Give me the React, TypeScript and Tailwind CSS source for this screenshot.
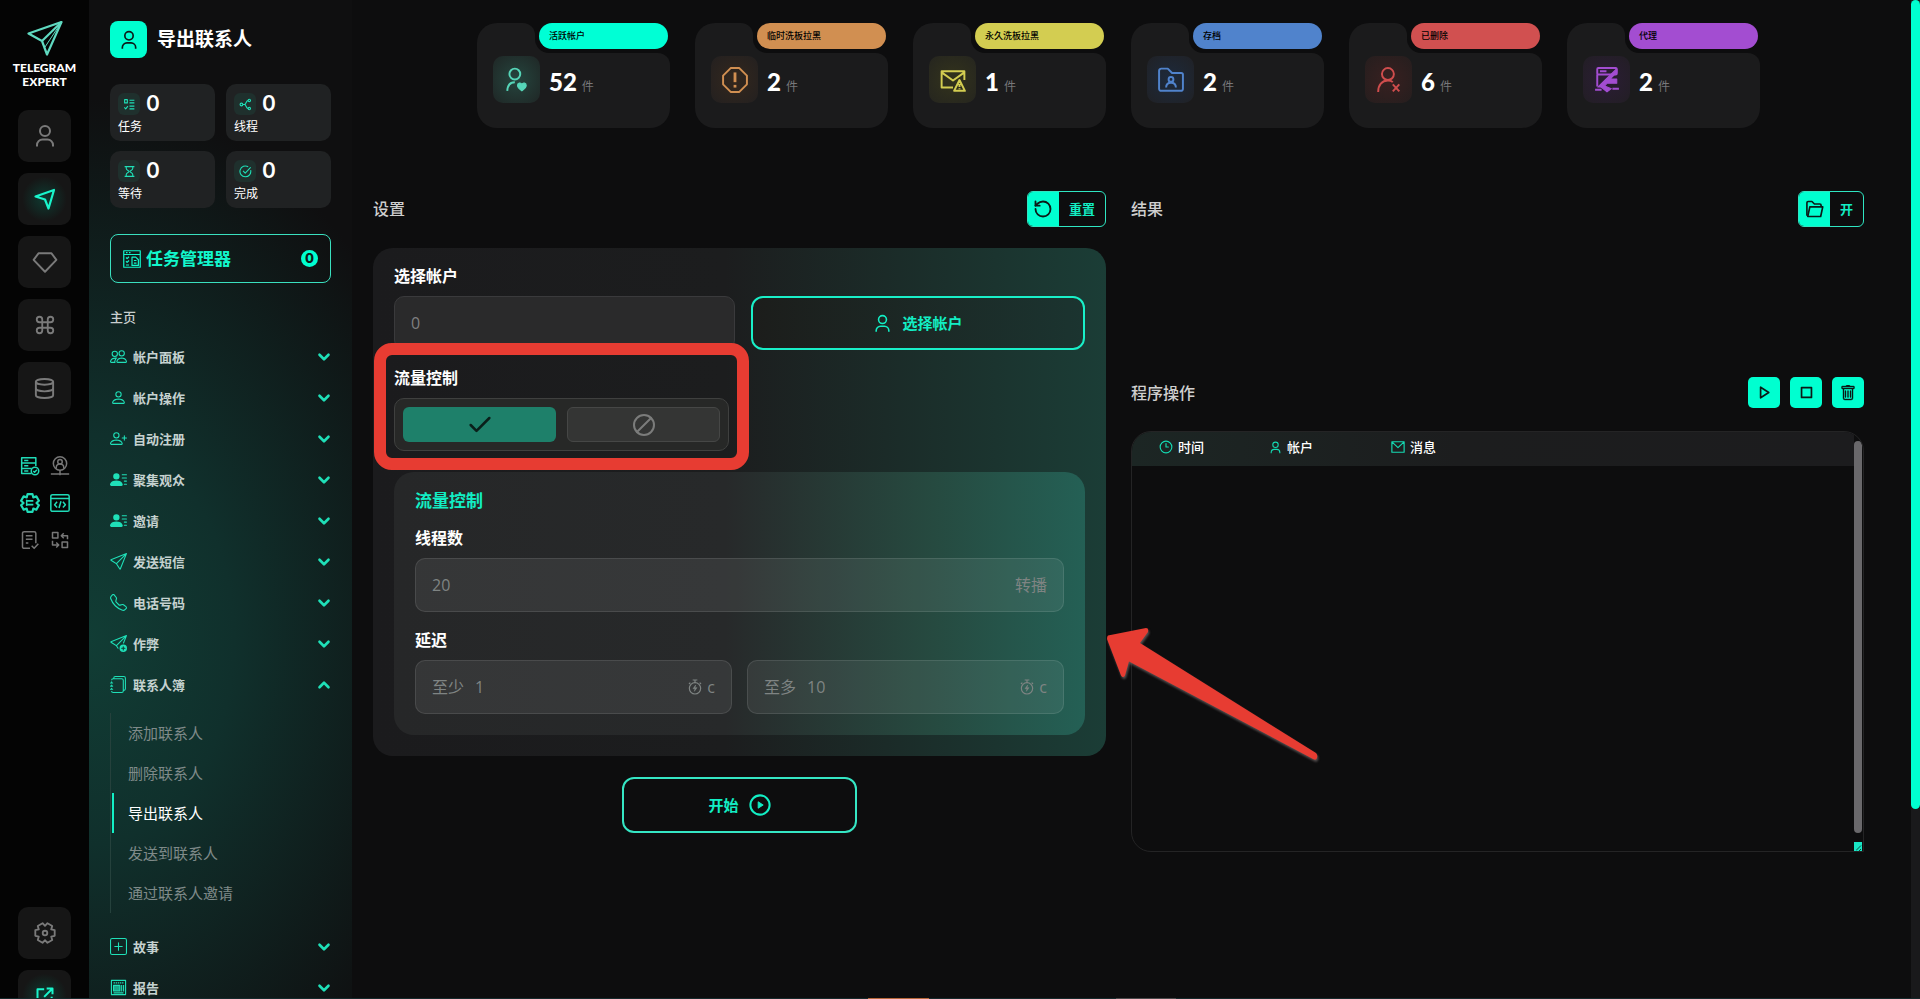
import React from "react";
import {
  BsJournals,
  BsPeople,
  BsPerson,
  BsPersonLinesFill,
  BsPersonPlus,
  BsPlusSquare,
  BsSend,
  BsSendPlus,
  BsTelephone,
  BsTrash,
} from "react-icons/bs";
import {
  Ban,
  Check,
  ChevronDown,
  ChevronUp,
  Clock3,
  Command,
  Database,
  RotateCcw,
} from "lucide-react";

type DrawProps = {
  size?: number;
  stroke?: number;
  className?: string;
  children: React.ReactNode;
};

function Draw({ size = 24, stroke = 2, className = "", children }: DrawProps) {
  return (
    <svg
      aria-hidden="true"
      width={size}
      height={size}
      viewBox="0 0 24 24"
      fill="none"
      stroke="currentColor"
      strokeWidth={stroke}
      strokeLinejoin="round"
      strokeLinecap="butt"
      className={"shrink-0 " + className}
    >
      {children}
    </svg>
  );
}

const userShape = (
  <>
    <circle cx="12" cy="7" r="5" />
    <path d="M4 22.5v-1.5a5.5 5.5 0 0 1 5.500-5.500h5a5.500 5.500 0 0 1 5.500 5.500v1.500" />
  </>
);

const listShape = (
  <>
    <rect x="3" y="3" width="5" height="6" />
    <path d="M12 4h9M12 9h9M12 15h9M12 20h9M2.500 17.500l2.500 2.500 4-5" />
  </>
);

const nodesShape = (
  <>
    <circle cx="4.500" cy="12" r="2.500" />
    <circle cx="19" cy="4.500" r="2.200" />
    <circle cx="19" cy="19.500" r="2.200" />
    <path d="M7 12h3c4 0 2.500-7.500 7-7.500M10 12c4 0 2.500 7.500 7 7.500" />
  </>
);

const hourglassShape = (
  <path d="M3 3h18M3 21h18M6 3v3.500c0 3 5 4 5 5.500s-5 2.500-5 5.500V21M18 3v3.500c0 3-5 4-5 5.500s5 2.500 5 5.500V21" />
);

const doneShape = (
  <>
    <path d="M21.500 9.500A10 10 0 1 1 17 3.300" />
    <path d="M7.500 11l4 4L21.500 4.500" />
  </>
);

const openShape = <path d="M11 4H3v17h17v-8M14 3h7v7M21 3L11 13" />;

const railButtons = [
  { label: "帐户", icon: <Draw size={24} stroke={2}>{userShape}</Draw> },
  {
    label: "发送",
    active: true,
    icon: (
      <Draw size={24} stroke={2.200}>
        <path d="M2.500 9.500L21 3l-5.500 18.500-3.500-9z" />
      </Draw>
    ),
  },
  {
    label: "高级",
    icon: (
      <Draw size={26} stroke={1.8}>
        <path d="M6 4h12l4.500 6L12 21 1.500 10z" />
      </Draw>
    ),
  },
  { label: "命令", icon: <Command size={22} strokeWidth={2} /> },
  { label: "数据库", icon: <Database size={23} strokeWidth={2} /> },
];

const gearPath =
  "M9 1.400h6l.9 3.850 3.740-1.160 3.030 5.250L19.800 12l2.870 2.660-3.030 5.250-3.740-1.160L15 22.600H9l-.9-3.850-3.740 1.160-3.030-5.250L4.200 12 1.330 9.340l3.030-5.250L8.100 5.250z";

const toolIcons = [
  {
    label: "服务器",
    on: true,
    node: (
      <>
        <path d="M14 21H2V2h17v10M2 8.500h17M2 15h12M5 5.300h5M5 11.800h5M5 18h5" />
        <circle cx="18" cy="18" r="4.500" />
        <path d="M16 18l1.500 1.500 2.800-3" />
      </>
    ),
  },
  {
    label: "代理",
    on: false,
    node: (
      <>
        <circle cx="12" cy="9" r="8" />
        <circle cx="12" cy="7" r="2.700" />
        <path d="M7.500 15v-1.500a4.500 4 0 0 1 9 0V15M12 17v6M1 21.500h22" />
      </>
    ),
  },
  {
    label: "设置",
    on: true,
    node: (
      <>
        <path strokeWidth="2.600" d={gearPath} />
        <path strokeWidth="2.200" d="M8 9.500h8M8 14h8" />
        <path d="M8 8v7.500" />
      </>
    ),
  },
  {
    label: "代码",
    on: true,
    node: (
      <>
        <rect x="1" y="2" width="22" height="20" rx="2" />
        <path d="M1 6.500h22M8.500 10.500l-3 3.500 3 3.500M15.500 10.500l3 3.500-3 3.500M13.200 10l-2.400 8" />
      </>
    ),
  },
  {
    label: "文档",
    on: false,
    node: (
      <>
        <path d="M12 22H5a2 2 0 0 1-2-2V4a2 2 0 0 1 2-2h12a2 2 0 0 1 2 2v12" />
        <path d="M7 7h8M7 11h8M7 15.500h3M14 19l3 3 5-5.500" />
      </>
    ),
  },
  {
    label: "交换",
    on: false,
    node: (
      <>
        <rect x="3" y="3" width="6.500" height="6.500" />
        <rect x="14.500" y="14.500" width="6.500" height="6.500" />
        <path d="M21 11V7h-7M16.500 4l-3 3 3 3M3 13v5h7M7.500 15l3 3-3 3" />
      </>
    ),
  },
];

const counters = [
  { label: "任务", shape: listShape },
  { label: "线程", shape: nodesShape },
  { label: "等待", shape: hourglassShape },
  { label: "完成", shape: doneShape },
];

type MenuEntry = { label: string; icon: React.ReactNode; items?: string[] };

const menu: MenuEntry[] = [
  { label: "帐户面板", icon: <BsPeople size={17} /> },
  { label: "帐户操作", icon: <BsPerson size={17} /> },
  { label: "自动注册", icon: <BsPersonPlus size={17} /> },
  { label: "聚集观众", icon: <BsPersonLinesFill size={17} /> },
  { label: "邀请", icon: <BsPersonLinesFill size={17} /> },
  { label: "发送短信", icon: <BsSend size={17} /> },
  { label: "电话号码", icon: <BsTelephone size={17} /> },
  { label: "作弊", icon: <BsSendPlus size={17} /> },
  {
    label: "联系人簿",
    icon: <BsJournals size={17} />,
    items: ["添加联系人", "删除联系人", "导出联系人", "发送到联系人", "通过联系人邀请"],
  },
  { label: "故事", icon: <BsPlusSquare size={17} /> },
  {
    label: "报告",
    icon: (
      <Draw size={17} stroke={1.6}>
        <rect x="2" y="2" width="20" height="20" />
        <path d="M5 5.500h14" strokeDasharray="2 1" />
        <path d="M5 9h9v8H5z" fill="currentColor" fillOpacity="0.7" />
        <path d="M16.500 8.500v9M19.200 8.500v9M5 19.500h14" />
      </Draw>
    ),
  },
];

const activeItem = "导出联系人";

const summary = [
  {
    label: "活跃帐户",
    value: 52,
    badge: "bg-[#00ffd5]",
    tile: "bg-[radial-gradient(circle,#25453e,#1f2625)] text-[#56d5b8]",
    icon: (
      <>
        <circle cx="10" cy="6.500" r="5" />
        <path d="M3 22c.3-5 3-8 7-8" />
        <path
          d="M16.500 22c-2.500-2-4-3-4-5a2.100 2.100 0 0 1 4-1 2.100 2.100 0 0 1 4 1c0 2-1.500 3-4 5z"
          fill="currentColor"
          strokeWidth="1"
        />
      </>
    ),
  },
  {
    label: "临时洗板拉黑",
    value: 2,
    badge: "bg-[#d18f51]",
    tile: "bg-[radial-gradient(circle,#33271d,#232020)] text-[#d18f51]",
    icon: (
      <>
        <path d="M8 1h8l7 7v8l-7 7H8l-7-7V8z" />
        <path d="M12 5v9" strokeWidth="2.600" />
        <path d="M12 16.500v2.500" strokeWidth="2.600" />
      </>
    ),
  },
  {
    label: "永久洗板拉黑",
    value: 1,
    badge: "bg-[#d3cd51]",
    tile: "bg-[radial-gradient(circle,#33331c,#25251f)] text-[#d3cd51]",
    icon: (
      <>
        <path d="M12 19H1.500V4h21v8M1.500 5L12 12.500 22.500 5" />
        <path d="M18 12l5 10H13zM18 15.500v3M18 19.500v1" />
      </>
    ),
  },
  {
    label: "存档",
    value: 2,
    badge: "bg-[#5083cc]",
    tile: "bg-[radial-gradient(circle,#1d2a3c,#202125)] text-[#5083cc]",
    icon: (
      <>
        <path d="M3 1.500h6l4 4h8.500a1.500 1.500 0 0 1 1.500 1.500v13a2 2 0 0 1-2 2H3a2 2 0 0 1-2-2v-16.500a2 2 0 0 1 2-2z" />
        <circle cx="12" cy="11.500" r="2.200" />
        <path d="M7.500 19c0-3 2-4.500 4.500-4.500s4.500 1.500 4.500 4.500" />
      </>
    ),
  },
  {
    label: "已删除",
    value: 6,
    badge: "bg-[#d15050]",
    tile: "bg-[radial-gradient(circle,#382020,#251e1e)] text-[#cf4d4d]",
    icon: (
      <>
        <circle cx="11" cy="6.500" r="5.500" />
        <path d="M2 23c0-6.500 3.500-10.500 9-10.500 2 0 3.500.5 4.500 1.500M15.500 16l6 6.500M21.500 16l-6 6.500" />
      </>
    ),
  },
  {
    label: "代理",
    value: 2,
    badge: "bg-[#a34dd1]",
    tile: "bg-[radial-gradient(circle,#2b1d35,#221e24)] text-[#a34dd1]",
    icon: (
      <>
        <rect x="3" y="1" width="18" height="6" rx="1" />
        <path d="M5.500 4h6M3 7v11" />
        <path d="M21 1.500L3.500 18.500H9l3-3.500h9v-4h-6l6-6z" fill="currentColor" strokeWidth="1" />
        <path d="M1 21h6M17 20h6" />
        <path d="M6 18l6 5 4-3-5-2z" fill="currentColor" strokeWidth="1" />
      </>
    ),
  },
];

function Rail() {
  return (
    <nav
      aria-label="主导航"
      className="flex h-full w-[89px] shrink-0 flex-col items-center overflow-hidden bg-[#040404] pt-[21px]"
    >
      <svg aria-hidden="true" width="36" height="36" viewBox="0 0 36 36" fill="none" stroke="#5fd9c0" strokeWidth="2.200" strokeLinejoin="round" className="shrink-0">
        <path d="M1.500 12.500L34.500 1 20 33.500 15 20z" />
        <path d="M34.500 1L15 20" />
        <path d="M34.500 1L18 26" strokeWidth="1" />
      </svg>
      <p className="mt-1 text-center font-['Lato',sans-serif] text-[12px] leading-[14px] font-black text-white">
        TELEGRAM
        <br />
        EXPERT
      </p>
      <div className="mt-[21px] flex flex-col gap-[11px]">
        {railButtons.map((b) => (
          <button
            key={b.label}
            type="button"
            aria-label={b.label}
            className={
              b.active
                ? "flex h-[52px] w-[53px] items-center justify-center rounded-[10px] bg-[radial-gradient(circle,#0e3a31_0%,#161616_60%)] text-[#19f5cb]"
                : "flex h-[52px] w-[53px] items-center justify-center rounded-[10px] bg-[#161616] text-[#7a7a7a]"
            }
          >
            {b.icon}
          </button>
        ))}
      </div>
      <div className="mt-[42px] grid grid-cols-2 gap-x-[10px] gap-y-[17px]">
        {toolIcons.map((t) => (
          <button
            key={t.label}
            type="button"
            aria-label={t.label}
            className={t.on ? "size-5 text-[#20dcb8]" : "size-5 text-[#777777]"}
          >
            <Draw size={20} stroke={1.8}>
              {t.node}
            </Draw>
          </button>
        ))}
      </div>
      <div className="mt-auto -mb-[23px] flex flex-col gap-[11px]">
        <button
          type="button"
          aria-label="系统设置"
          className="flex h-[52px] w-[53px] items-center justify-center rounded-[10px] bg-[#161616] text-[#7a7a7a]"
        >
          <Draw size={22} stroke={2}>
            <g transform="rotate(30 12 12)">
              <path d={gearPath} />
            </g>
            <circle cx="12" cy="12" r="2.500" />
          </Draw>
        </button>
        <button
          type="button"
          aria-label="退出"
          className="flex h-[52px] w-[53px] items-center justify-center rounded-[10px] bg-[radial-gradient(circle,#0e3a31_0%,#161616_60%)] text-[#19f5cb]"
        >
          <Draw size={20} stroke={2.4}>
            {openShape}
          </Draw>
        </button>
      </div>
    </nav>
  );
}

function Sidebar() {
  return (
    <aside className="h-full w-[263px] shrink-0 overflow-hidden bg-[#0f0f10] bg-[radial-gradient(ellipse_145%_54%_at_0%_64%,#113d35_0%,#10302c_38%,#0f0f10_100%)] px-[21px] pt-[21px]">
      <header className="flex items-center gap-[10px]">
        <span className="flex size-[37px] items-center justify-center rounded-lg bg-[#00ffd0] text-[#0b1a17]">
          <Draw size={20} stroke={2}>
            {userShape}
          </Draw>
        </span>
        <h1 className="text-[19px] leading-[37px] font-bold text-white">导出联系人</h1>
      </header>

      <div className="mt-[26px] grid grid-cols-2 gap-x-[11px] gap-y-[10px]">
        {counters.map((c) => (
          <div key={c.label} className="h-[57px] rounded-[10px] bg-[#202223] px-2 pt-2">
            <div className="flex items-center gap-[6px]">
              <span className="flex size-[22px] items-center justify-center rounded-md bg-[#1f302d] text-[#1fe0b8]">
                <Draw size={13} stroke={2}>
                  {c.shape}
                </Draw>
              </span>
              <span className="font-['Inter',sans-serif] text-[21px] leading-6 font-semibold text-white">
                0
              </span>
            </div>
            <p className="text-[12px] leading-[22px] text-white">{c.label}</p>
          </div>
        ))}
      </div>

      <button
        type="button"
        className="mt-[26px] flex h-[49px] w-full items-center gap-[5px] rounded-lg border border-[#3ae0bf] px-3 text-[#12f7cc]"
      >
        <Draw size={18} stroke={1.6}>
          <path d="M1 1h22v22H1zM1 6h22M4 3.500h2M8 3.500h2M4 10l1.500 1.500L8 9M4 15l1.500 1.500L8 14M4 20h4M12 9.500h5l3.500 3.500v7.500H12zM14.500 14h3.500M14.500 17.500h3.500" />
        </Draw>
        <span className="text-[17px] leading-6 font-bold">任务管理器</span>
        <span className="ml-auto flex size-[17px] items-center justify-center rounded-full bg-[#00ffd0] font-['Inter',sans-serif] text-[13px] font-extrabold text-[#0d1a18]">
          0
        </span>
      </button>

      <p className="mt-[23px] text-[13px] leading-[22px] font-medium text-[#c9cfce]">主页</p>

      <ul className="mt-2">
        {menu.map((m) => (
          <li key={m.label}>
            <button type="button" className="flex h-[41px] w-full items-center gap-[6px] text-[#1fe0b8]">
              {m.icon}
              <span className="text-[13px] leading-5 font-bold text-[#c5d2d0]">{m.label}</span>
              {m.items ? (
                <ChevronUp size={18} strokeWidth={3.500} className="-mr-[2px] ml-auto" />
              ) : (
                <ChevronDown size={18} strokeWidth={3.500} className="-mr-[2px] ml-auto" />
              )}
            </button>
            {m.items && (
              <ul className="mt-2 mb-[13px] border-l border-[#25413c]">
                {m.items.map((item) => (
                  <li key={item} className="pl-px">
                    <a
                      href="#"
                      className={
                        item === activeItem
                          ? "block border-l-2 border-[#13f0c6] pl-[14px] text-[15px] leading-10 text-white"
                          : "block border-l-2 border-transparent pl-[14px] text-[15px] leading-10 text-[#7f8a89]"
                      }
                    >
                      {item}
                    </a>
                  </li>
                ))}
              </ul>
            )}
          </li>
        ))}
      </ul>
    </aside>
  );
}

function SummaryCards() {
  return (
    <section aria-label="统计" className="flex justify-center gap-[25px]">
      {summary.map((s) => (
        <div key={s.label} className="w-[193px]">
          <div className="flex h-[30px]">
            <div className="w-[58px] rounded-tl-[20px] rounded-tr-[12px] bg-[#1b1b1c]" />
            <div className="flex-1 bg-[#1b1b1c]">
              <div className="h-full rounded-bl-[14px] bg-[#0d0d0e] pr-[2px] pl-1">
                <div
                  className={
                    "flex h-[26px] items-center rounded-full px-[10px] text-[9px] font-medium text-black " +
                    s.badge
                  }
                >
                  {s.label}
                </div>
              </div>
            </div>
          </div>
          <div className="flex h-[75px] items-start gap-[9px] rounded-tr-[12px] rounded-b-[20px] bg-[#1b1b1c] pt-[3px] pl-4">
            <span className={"flex size-[47px] items-center justify-center rounded-[10px] " + s.tile}>
              <Draw size={26} stroke={1.8}>
                {s.icon}
              </Draw>
            </span>
            <p className="flex items-baseline gap-[5px] leading-[52px]">
              <span className="font-['Lato',sans-serif] text-[24px] font-black text-white">{s.value}</span>
              <span className="text-[12px] text-[#77777a]">件</span>
            </p>
          </div>
        </div>
      ))}
    </section>
  );
}

function SplitButton({ icon, label }: { icon: React.ReactNode; label: string }) {
  return (
    <button
      type="button"
      className="flex h-9 items-stretch overflow-hidden rounded-md border border-[#2fe6c2] text-[#12eec4]"
    >
      <span className="flex w-[31px] items-center justify-center bg-[#00ffd0] text-[#0b1a17]">{icon}</span>
      <span className="flex items-center px-[10px] text-[13px] leading-5 font-bold">{label}</span>
    </button>
  );
}

const fieldBox =
  "flex h-[54px] items-center rounded-[10px] border border-white/10 bg-white/7 px-4 text-[16px] text-[#7f8483]";
const labelText = "block text-[16px] leading-6 font-bold text-white";

function DelayField({ id, label, value }: { id: string; label: string; value: string }) {
  return (
    <div className={fieldBox}>
      <label htmlFor={id} className="mr-[11px]">
        {label}
      </label>
      <input id={id} defaultValue={value} className="w-0 min-w-0 flex-1 bg-transparent outline-none" />
      <Draw size={16} stroke={1.8} className="mr-1">
        <circle cx="12" cy="14" r="8.500" />
        <path d="M8.500 1.500h7M12 1.500v4M19 5.500l2 2M5 5.500l-2 2" />
        <path d="M13 9l-4 5.500h3l-1 4 4-5.500h-3z" fill="currentColor" strokeWidth="0.800" />
      </Draw>
      <span>c</span>
    </div>
  );
}

function Settings() {
  return (
    <section>
      <header className="flex h-9 items-center justify-between">
        <h2 className="text-[16px] leading-6 font-medium text-[#cfcfcf]">设置</h2>
        <SplitButton icon={<RotateCcw size={20} strokeWidth={2.200} />} label="重置" />
      </header>

      <div className="mt-[21px] rounded-[20px] bg-[linear-gradient(90deg,#1b1b1d_0%,#1c1d1e_48%,#1b2b28_70%,#1b3d36_100%)] px-[21px] pt-4 pb-[21px]">
        <label htmlFor="account" className={labelText}>
          选择帐户
        </label>
        <div className="mt-2 grid grid-cols-[341fr_334fr] gap-4">
          <input
            id="account"
            defaultValue="0"
            className="h-[54px] w-full min-w-0 rounded-[10px] border border-[#3a3a3c] bg-[#2a2a2b] px-4 text-[16px] text-[#7f7f80] outline-none"
          />
          <button
            type="button"
            className="flex h-[54px] items-center justify-center gap-[10px] rounded-[12px] border-2 border-[#19efc8] bg-[linear-gradient(90deg,#1c1d1b,#1b3430)] text-[15px] font-bold text-[#12eec4]"
          >
            <Draw size={19} stroke={2}>
              {userShape}
            </Draw>
            选择帐户
          </button>
        </div>

        <fieldset className="relative z-10 mt-4 w-[335px] max-w-full">
          <span className="pointer-events-none absolute -inset-x-5 -top-[23px] -bottom-[19px] rounded-[18px] border-12 border-[#e73c32]" />
          <legend className="contents">
            <span className={labelText}>流量控制</span>
          </legend>
          <div className="mt-2 grid h-[53px] grid-cols-2 gap-[11px] rounded-[10px] border border-[#3f403f] bg-[#272827] p-2">
            <button
              type="button"
              aria-label="启用"
              className="flex items-center justify-center rounded-md bg-[#1e806a] text-[#0a1f1a]"
            >
              <Check size={28} strokeWidth={2.200} />
            </button>
            <button
              type="button"
              aria-label="禁用"
              className="flex items-center justify-center rounded-md border border-[#464746] bg-[#343534] text-[#7b7c7b]"
            >
              <Ban size={24} strokeWidth={2} className="-scale-x-100" />
            </button>
          </div>
        </fieldset>

        <div className="mt-[21px] rounded-[20px] bg-[linear-gradient(90deg,#262728_0%,#27292a_48%,#264a40_78%,#246055_100%)] px-[21px] pt-[17px] pb-[21px]">
          <h3 className="text-[17px] leading-6 font-bold text-[#12eec4]">流量控制</h3>
          <label htmlFor="threads" className={"mt-[13px] " + labelText}>
            线程数
          </label>
          <div className={"mt-2 " + fieldBox}>
            <input
              id="threads"
              defaultValue="20"
              className="min-w-0 flex-1 bg-transparent outline-none"
            />
            <span>转播</span>
          </div>
          <p className={"mt-4 " + labelText}>延迟</p>
          <div className="mt-2 grid grid-cols-2 gap-[15px]">
            <DelayField id="delay-min" label="至少" value="1" />
            <DelayField id="delay-max" label="至多" value="10" />
          </div>
        </div>
      </div>

      <button
        type="button"
        className="mx-auto mt-[21px] flex h-14 w-[235px] items-center justify-center gap-[10px] rounded-[12px] border-2 border-[#35e6c4] text-[15px] font-bold text-[#12eec4]"
      >
        开始
        <Draw size={22} stroke={2.200}>
          <circle cx="12" cy="12" r="10.500" />
          <path d="M10 8.500l5.500 3.500-5.500 3.500z" fill="currentColor" strokeWidth="1" />
        </Draw>
      </button>
    </section>
  );
}

const logColumns = [
  { label: "时间", width: "w-[137px] pl-[27px]", icon: <Clock3 size={14} strokeWidth={2} /> },
  {
    label: "帐户",
    width: "w-[122px]",
    icon: (
      <Draw size={13} stroke={2}>
        {userShape}
      </Draw>
    ),
  },
  {
    label: "消息",
    width: "",
    icon: (
      <Draw size={14} stroke={2}>
        <path d="M1.500 3h21v18h-21zM2.500 4l9.500 9 9.500-9" />
      </Draw>
    ),
  },
];

const logActions = [
  {
    label: "播放",
    icon: (
      <Draw size={17} stroke={2.400}>
        <path d="M6.500 4.500v15L18 12z" />
      </Draw>
    ),
  },
  {
    label: "停止",
    icon: (
      <Draw size={17} stroke={2.400}>
        <path d="M5 5h14v14H5z" />
      </Draw>
    ),
  },
  {
    label: "删除",
    icon: <BsTrash size={16} strokeWidth={0.4} />,
  },
];

function Results() {
  return (
    <section className="relative">
      <header className="flex h-9 items-center justify-between">
        <h2 className="text-[16px] leading-6 font-medium text-[#cfcfcf]">结果</h2>
        <SplitButton
          label="开"
          icon={
            <Draw size={20} stroke={2}>
              <path d="M3.500 20V4.500a1.500 1.500 0 0 1 1.500-1.500h4.500l3 3h6.500a1.500 1.500 0 0 1 1.500 1.500V9.500" />
              <path d="M7 9.500h15.500l-2.500 11.500H4.500z" />
            </Draw>
          }
        />
      </header>

      <header className="mt-[150px] flex h-[31px] items-center justify-between">
        <h2 className="text-[16px] leading-6 font-medium text-[#cfcfcf]">程序操作</h2>
        <div className="flex gap-[10px]">
          {logActions.map((a) => (
            <button
              key={a.label}
              type="button"
              aria-label={a.label}
              className="flex h-[31px] w-8 items-center justify-center rounded-[5px] bg-[#00ffd0] text-[#0b1a17]"
            >
              {a.icon}
            </button>
          ))}
        </div>
      </header>

      <div className="mt-[23px] flex h-[421px] overflow-hidden rounded-[20px] rounded-br-none border border-[#242425]">
        <div className="flex-1">
          <table className="w-full table-fixed text-left">
            <thead>
              <tr className="h-[34px] bg-[linear-gradient(90deg,#1c2624_0%,#1c1d1e_45%,#1c1c1e_100%)]">
                {logColumns.map((c) => (
                  <th key={c.label} scope="col" className={"p-0 pb-1 font-medium " + c.width}>
                    <span className="flex items-center gap-[5px] text-[#14d9b2]">
                      {c.icon}
                      <span className="text-[13px] leading-5 text-white">{c.label}</span>
                    </span>
                  </th>
                ))}
              </tr>
            </thead>
          </table>
        </div>
        <div className="flex w-[9px] flex-col items-start justify-between pt-[9px]">
          <div className="h-[392px] w-2 rounded-full bg-[#69686b]" />
          <div className="flex h-[9px] w-2 items-end justify-end bg-[#19e6c5]">
            <svg aria-hidden="true" width="6" height="6" viewBox="0 0 6 6" stroke="#0d4a3f" strokeWidth="1">
              <path d="M0 5.500L5 .500M3 6l2-2" />
            </svg>
          </div>
        </div>
      </div>

      <svg
        aria-hidden="true"
        width="214"
        height="136"
        viewBox="0 0 214 136"
        className="pointer-events-none absolute top-[436px] -left-[25px] drop-shadow-[1px_2px_1px_rgba(120,110,110,0.7)]"
      >
        <path
          d="M2 8.500L40 1q3 0 2 4l-8 11 176 110q2 2 1 5t-4 1L23 34.500l-4 14q-2 3-4 0L1 12q0-3 1-3.500z"
          fill="#e73c32"
        />
      </svg>
    </section>
  );
}

export default function App() {
  return (
    <div className="relative flex h-screen overflow-hidden bg-[#0d0d0e] font-['Open_Sans','Noto_Sans_CJK_SC',sans-serif]">
      <Rail />
      <Sidebar />
      <main className="min-w-0 flex-1 overflow-hidden pt-[23px] pr-[47px] pl-[21px]">
        <SummaryCards />
        <div className="mt-[63px] grid grid-cols-2 gap-[25px]">
          <Settings />
          <Results />
        </div>
      </main>
      <div className="h-full w-[9px] shrink-0 bg-[#19191b]">
        <div className="h-[81%] rounded-full bg-[#00ffd0]" />
      </div>
      <div className="absolute inset-x-0 bottom-0 flex h-px bg-[#16292c]">
        <div className="ml-[868px] w-[61px] bg-[#b8683a]" />
        <div className="ml-[187px] w-[60px] bg-[#4a4a4c]" />
      </div>
    </div>
  );
}
